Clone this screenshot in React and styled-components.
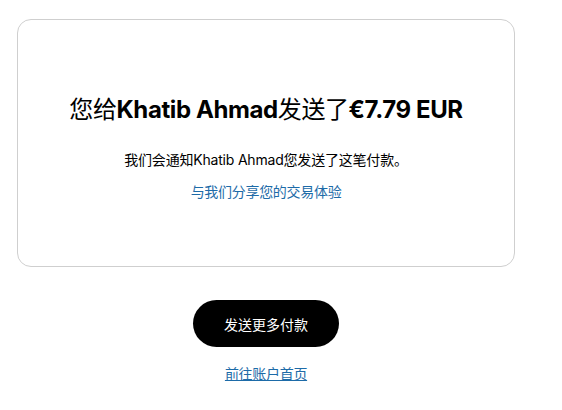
import React from "react";
import styled, { createGlobalStyle } from "styled-components";

const GlobalStyle = createGlobalStyle`
  body {
    margin: 0;
    background: #ffffff;
    font-family: "Inter", "Noto Sans CJK SC", sans-serif;
    color: #000000;
  }
`;

const Page = styled.main`
  width: 498px;
  padding: 19px 0 0 17px;
  display: flex;
  flex-direction: column;
  align-items: center;
`;

const Card = styled.section`
  box-sizing: border-box;
  width: 100%;
  height: 248px;
  border: 1px solid #cfcfcf;
  border-radius: 14px;
  padding-top: 74px;
  display: flex;
  flex-direction: column;
  align-items: center;
`;

const Title = styled.h1`
  margin: 0;
  font-size: 24px;
  line-height: 32px;
  font-weight: 400;
  letter-spacing: -0.4px;
  white-space: nowrap;

  strong {
    font-weight: 700;
  }
`;

const Note = styled.p`
  margin: 25px 0 0;
  font-size: 14px;
  line-height: 18px;
  letter-spacing: -0.2px;
`;

const TextLink = styled.a`
  margin-top: ${({ $gap }) => $gap}px;
  font-size: 14px;
  line-height: 18px;
  letter-spacing: -0.3px;
  color: #1d6ba8;
  text-decoration: ${({ $underline }) => ($underline ? "underline" : "none")};
  cursor: pointer;
`;

const PrimaryButton = styled.button`
  margin-top: 33px;
  width: 146px;
  height: 47px;
  border: none;
  border-radius: 24px;
  background: #000000;
  color: #ffffff;
  font-family: inherit;
  font-size: 14px;
  cursor: pointer;
`;

export default function App() {
  return (
    <>
      <GlobalStyle />
      <Page>
        <Card>
          <Title>
            您给<strong>Khatib Ahmad</strong>发送了<strong>€7.79 EUR</strong>
          </Title>
          <Note>我们会通知Khatib Ahmad您发送了这笔付款。</Note>
          <TextLink $gap={14}>与我们分享您的交易体验</TextLink>
        </Card>
        <PrimaryButton>发送更多付款</PrimaryButton>
        <TextLink $gap={18} $underline>
          前往账户首页
        </TextLink>
      </Page>
    </>
  );
}
